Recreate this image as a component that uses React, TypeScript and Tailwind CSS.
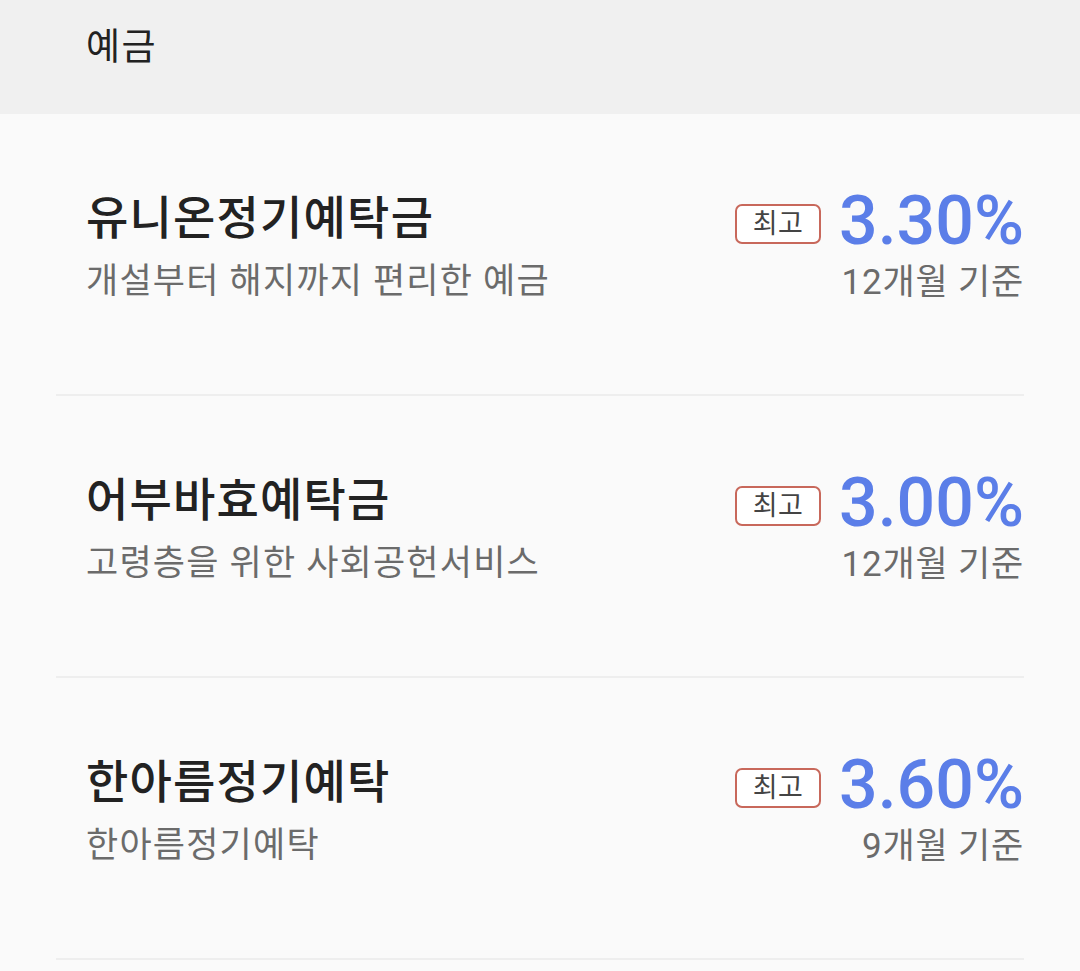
const products = [
  { name: '유니온정기예탁금', desc: '개설부터 해지까지 편리한 예금', rate: '3.30%', period: '12개월 기준' },
  { name: '어부바효예탁금', desc: '고령층을 위한 사회공헌서비스', rate: '3.00%', period: '12개월 기준' },
  { name: '한아름정기예탁', desc: '한아름정기예탁', rate: '3.60%', period: '9개월 기준' },
];

const font = { fontFamily: 'Roboto, "Noto Sans CJK KR", sans-serif' };

export default function App() {
  return (
    <div className="min-h-screen bg-[#fafafa]" style={font}>
      <header className="h-[114px] bg-[#f0f0f0] pl-[86px] pt-[22px]">
        <h1 className="text-[37px] leading-[52px] tracking-[1.5px] text-[#222222]">예금</h1>
      </header>

      <main className="px-[56px]">
        {products.map(p => (
          <div
            key={p.name}
            className="h-[282px] border-b-2 border-[#eeeeee] flex items-center justify-between pl-[30px] pb-[6px]"
          >
            <div className="flex flex-col">
              <span className="text-[46px] leading-[60px] tracking-[1.2px] font-medium text-[#222222] -mt-[8px]">{p.name}</span>
              <span className="text-[35px] leading-[48px] tracking-[1.2px] text-[#6b6b6b] mt-[10px]">{p.desc}</span>
            </div>
            <div className="flex flex-col items-end">
              <div className="flex items-center -mt-[4px]">
                <span className="h-[40px] w-[86px] flex items-center justify-center rounded-[7px] border-2 border-[#c8685b] bg-white text-[27px] tracking-[0.5px] text-[#444444] mr-[18px] mt-[6px]">
                  최고
                </span>
                <span className="text-[68px] leading-[60px] font-medium text-[#5b7ee8]">{p.rate}</span>
              </div>
              <span className="text-[35px] leading-[48px] tracking-[0.8px] text-[#6b6b6b] mt-[8px]">{p.period}</span>
            </div>
          </div>
        ))}
      </main>
    </div>
  );
}
